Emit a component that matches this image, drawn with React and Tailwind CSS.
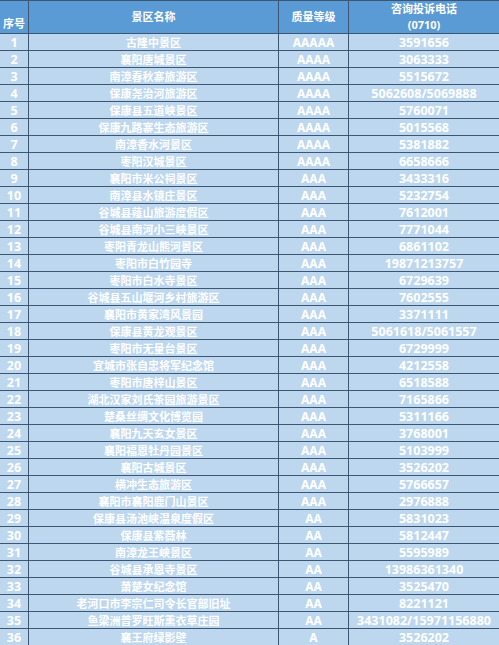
const rows = [
  ["古隆中景区", "AAAAA", "3591656"],
  ["襄阳唐城景区", "AAAA", "3063333"],
  ["南漳春秋寨旅游区", "AAAA", "5515672"],
  ["保康尧治河旅游区", "AAAA", "5062608/5069888"],
  ["保康县五道峡景区", "AAAA", "5760071"],
  ["保康九路寨生态旅游区", "AAAA", "5015568"],
  ["南漳香水河景区", "AAAA", "5381882"],
  ["枣阳汉城景区", "AAAA", "6658666"],
  ["襄阳市米公祠景区", "AAA", "3433316"],
  ["南漳县水镜庄景区", "AAA", "5232754"],
  ["谷城县薤山旅游度假区", "AAA", "7612001"],
  ["谷城县南河小三峡景区", "AAA", "7771044"],
  ["枣阳青龙山熊河景区", "AAA", "6861102"],
  ["枣阳市白竹园寺", "AAA", "19871213757"],
  ["枣阳市白水寺景区", "AAA", "6729639"],
  ["谷城县五山堰河乡村旅游区", "AAA", "7602555"],
  ["襄阳市黄家湾风景园", "AAA", "3371111"],
  ["保康县黄龙观景区", "AAA", "5061618/5061557"],
  ["枣阳市无量台景区", "AAA", "6729999"],
  ["宜城市张自忠将军纪念馆", "AAA", "4212558"],
  ["枣阳市唐梓山景区", "AAA", "6518588"],
  ["湖北汉家刘氏茶园旅游景区", "AAA", "7165866"],
  ["楚桑丝绸文化博览园", "AAA", "5311166"],
  ["襄阳九天玄女景区", "AAA", "3768001"],
  ["襄阳福恩牡丹园景区", "AAA", "5103999"],
  ["襄阳古城景区", "AAA", "3526202"],
  ["横冲生态旅游区", "AAA", "5766657"],
  ["襄阳市襄阳鹿门山景区", "AAA", "2976888"],
  ["保康县汤池峡温泉度假区", "AA", "5831023"],
  ["保康县紫薇林", "AA", "5812447"],
  ["南漳龙王峡景区", "AA", "5595989"],
  ["谷城县承恩寺景区", "AA", "13986361340"],
  ["萧楚女纪念馆", "AA", "3525470"],
  ["老河口市李宗仁司令长官部旧址", "AA", "8221121"],
  ["鱼梁洲普罗旺斯熏衣草庄园", "AA", "3431082/15971156880"],
  ["襄王府绿影壁", "A", "3526202"],
];

const cell = "border border-[#3d5673] text-center align-middle p-0";

export default function App() {
  return (
    <div
      className="w-[499px] h-[645px] overflow-hidden bg-[#bdd7ee]"
      style={{ fontFamily: '"Noto Sans", "Noto Sans CJK SC", sans-serif' }}
    >
      <table className="w-[500px] table-fixed border-collapse text-white font-bold -ml-px">
        <colgroup>
          <col className="w-[29px]" />
          <col className="w-[250px]" />
          <col className="w-[70px]" />
          <col className="w-[151px]" />
        </colgroup>
        <thead>
          <tr className="h-[32px] bg-[#5b9bd5] text-[11px] leading-[16px]">
            <th className={cell + " !align-bottom pb-[1px]"}>序号</th>
            <th className={cell}>景区名称</th>
            <th className={cell}>质量等级</th>
            <th className={cell}>
              咨询投诉电话
              <br />
              (0710)
            </th>
          </tr>
        </thead>
        <tbody>
          {rows.map((r, i) => (
            <tr key={i} className="h-[17px] bg-[#bdd7ee] leading-[15px]">
              <td className={cell + " text-[12.5px]"}>{i + 1}</td>
              <td className={cell + " text-[11px]"}>{r[0]}</td>
              <td className={cell + " text-[12px]"}>{r[1]}</td>
              <td className={cell + " text-[12.5px]"}>{r[2]}</td>
            </tr>
          ))}
        </tbody>
      </table>
    </div>
  );
}
